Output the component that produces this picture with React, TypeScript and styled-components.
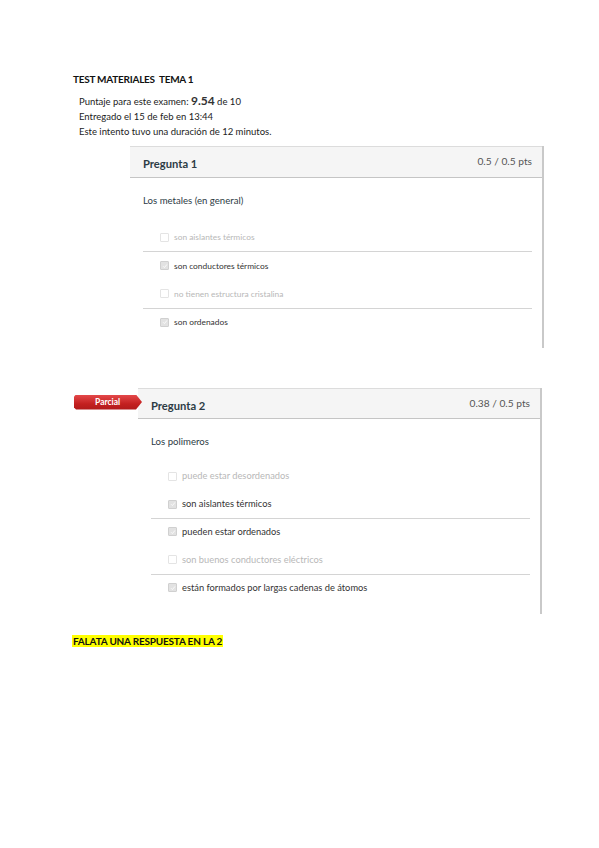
import React from 'react'
import styled, { createGlobalStyle } from 'styled-components'

const GlobalStyle = createGlobalStyle`
  html, body {
    margin: 0;
    padding: 0;
    background: #ffffff;
  }
  body {
    font-family: Lato, "Liberation Sans", Arial, sans-serif;
    color: #2d3b45;
  }
`

const Page = styled.div`
  width: 599px;
  min-height: 848px;
  padding-top: 72px;
  box-sizing: border-box;
  display: flex;
  flex-direction: column;
`

const ExamTitle = styled.div`
  margin-left: 73px;
  font-size: 10px;
  line-height: 14px;
  font-weight: 700;
  color: #111;
  letter-spacing: -0.25px;
  white-space: pre;
`

const Summary = styled.div`
  margin: 7px 0 0 79px;
  font-size: 9.5px;
  line-height: 15px;
  color: #222;
`

const Score = styled.b`
  font-size: 12px;
  font-weight: 700;
  color: #333;
`

const Card = styled.section<{ $left: number; $width: number; $top: number }>`
  position: relative;
  margin-left: ${(p) => p.$left}px;
  margin-top: ${(p) => p.$top}px;
  width: ${(p) => p.$width}px;
  border-right: 2px solid #c9c9c9;
  box-sizing: border-box;
`

const CardHeader = styled.header<{ $height: number }>`
  height: ${(p) => p.$height}px;
  box-sizing: border-box;
  background: #f5f5f5;
  border-top: 1px solid #dcdcdc;
  border-bottom: 1px solid #c5c5c5;
  display: flex;
  justify-content: space-between;
  align-items: flex-start;
  padding: 0 10px 0 13px;
`

const QuestionName = styled.h2`
  margin: 9px 0 0;
  font-size: 11.2px;
  line-height: 16px;
  font-weight: 700;
  color: #2d3b45;
`

const Points = styled.span`
  margin-top: 6px;
  font-size: 10.2px;
  line-height: 16px;
  color: #555;
`

const CardBody = styled.div<{ $bottom: number }>`
  padding: 16px 10px ${(p) => p.$bottom}px 13px;
`

const QuestionText = styled.p<{ $gap: number }>`
  margin: 0 0 ${(p) => p.$gap}px;
  font-size: 9.6px;
  line-height: 14px;
  color: #2d3b45;
`

const Answer = styled.div<{ $picked: boolean; $divider: boolean; $size: number; $pad: number }>`
  display: flex;
  align-items: center;
  gap: 5px;
  padding: ${(p) => p.$pad}px 0 ${(p) => p.$pad}px 17px;
  font-size: ${(p) => p.$size}px;
  line-height: 14px;
  color: ${(p) => (p.$picked ? '#333' : '#b8b8b8')};
  border-bottom: 1px solid ${(p) => (p.$divider ? '#d4d4d4' : 'transparent')};
  margin-bottom: -1px;
`

const Box = styled.span<{ $checked: boolean }>`
  width: 7px;
  height: 7px;
  flex: none;
  border: 1px solid ${(p) => (p.$checked ? '#d0d0d0' : '#e4e4e4')};
  background: ${(p) => (p.$checked ? '#e2e2e2' : '#fff')};
  border-radius: 1px;
  display: flex;
  align-items: center;
  justify-content: center;
`

const Badge = styled.div`
  position: absolute;
  left: -64px;
  top: 7px;
  width: 68px;
  height: 15px;
  background: linear-gradient(#e4484a, #c3201f 60%, #b01a1a);
  clip-path: polygon(0 2px, 2px 0, 62px 0, 68px 50%, 62px 100%, 2px 100%, 0 13px);
  color: #fff;
  font-size: 8.5px;
  font-weight: 700;
  line-height: 15px;
  padding-left: 21px;
  box-sizing: border-box;
`

const Note = styled.div`
  margin: 21px 0 0 72px;
  font-size: 10px;
  line-height: 13px;
  font-weight: 700;
  color: #111;
  letter-spacing: -0.2px;
`

const Highlight = styled.span`
  background: #ffff00;
  padding: 0 1px;
`

type Option = { text: string; checked: boolean; divider?: boolean }

function Check({ checked }: { checked: boolean }) {
  return (
    <Box $checked={checked}>
      {checked && (
        <svg width="6" height="6" viewBox="0 0 6 6">
          <path d="M1 3.2 L2.4 4.6 L5 1.4" fill="none" stroke="#fafafa" strokeWidth="1" />
        </svg>
      )}
    </Box>
  )
}

function AnswerList({ options, size, pad }: { options: Option[]; size: number; pad: number }) {
  return (
    <div>
      {options.map((o) => (
        <Answer key={o.text} $picked={o.checked} $divider={!!o.divider} $size={size} $pad={pad}>
          <Check checked={o.checked} />
          {o.text}
        </Answer>
      ))}
    </div>
  )
}

const q1: Option[] = [
  { text: 'son aislantes térmicos', checked: false, divider: true },
  { text: 'son conductores térmicos', checked: true },
  { text: 'no tienen estructura cristalina', checked: false, divider: true },
  { text: 'son ordenados', checked: true },
]

const q2: Option[] = [
  { text: 'puede estar desordenados', checked: false },
  { text: 'son aislantes térmicos', checked: true, divider: true },
  { text: 'pueden estar ordenados', checked: true },
  { text: 'son buenos conductores eléctricos', checked: false, divider: true },
  { text: 'están formados por largas cadenas de átomos', checked: true },
]

export default function App() {
  return (
    <Page>
      <GlobalStyle />
      <ExamTitle>{'TEST MATERIALES  TEMA 1'}</ExamTitle>
      <Summary>
        <div>
          Puntaje para este examen: <Score>9.54</Score> de 10
        </div>
        <div>Entregado el 15 de feb en 13:44</div>
        <div>Este intento tuvo una duración de 12 minutos.</div>
      </Summary>

      <Card $left={130} $width={414} $top={7}>
        <CardHeader $height={32}>
          <QuestionName>Pregunta 1</QuestionName>
          <Points>0.5 / 0.5 pts</Points>
        </CardHeader>
        <CardBody $bottom={11}>
          <QuestionText $gap={15}>Los metales (en general)</QuestionText>
          <AnswerList options={q1} size={8.4} pad={7.2} />
        </CardBody>
      </Card>

      <Card $left={138} $width={404} $top={40}>
        <Badge>Parcial</Badge>
        <CardHeader $height={31}>
          <QuestionName>Pregunta 2</QuestionName>
          <Points>0.38 / 0.5 pts</Points>
        </CardHeader>
        <CardBody $bottom={13}>
          <QuestionText $gap={14}>Los polimeros</QuestionText>
          <AnswerList options={q2} size={9.3} pad={6.9} />
        </CardBody>
      </Card>

      <Note>
        <Highlight>FALATA UNA RESPUESTA EN LA 2</Highlight>
      </Note>
    </Page>
  )
}
